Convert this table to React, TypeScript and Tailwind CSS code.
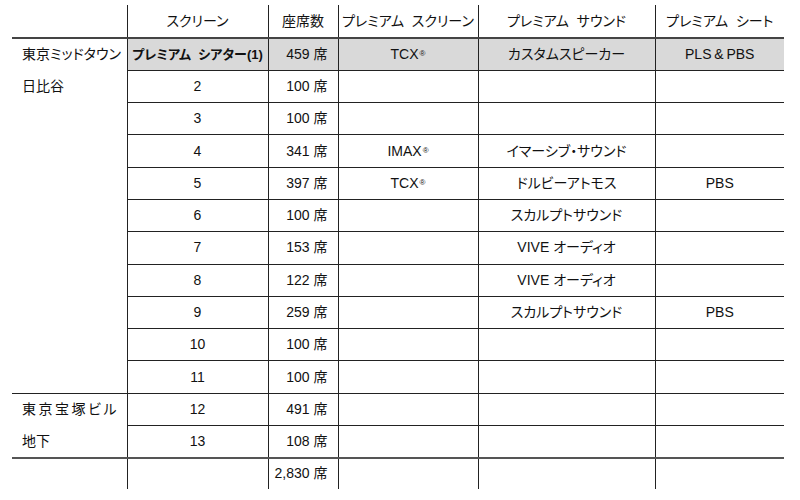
import React from "react";

type Row = {
  site?: string;
  screen: string;
  seats: string;
  scr?: React.ReactNode;
  sound?: string;
  seat?: string;
  gray?: boolean;
  lineLeft?: boolean; // bottom line runs under the first column too
  heavy?: boolean;
  noLine?: boolean;
};

const Reg = ({ t }: { t: string }) => (
  <span>
    {t}
    <sup className="text-[8px] relative -top-[3px] ml-[1px]">®</sup>
  </span>
);

const rows: Row[] = [
  { site: "東京ミッドタウン", screen: "プレミアム  シアター(1)", seats: "459 席", scr: <Reg t="TCX" />, sound: "カスタムスピーカー", seat: "PLS\u2009&\u2009PBS", gray: true },
  { site: "日比谷", screen: "2", seats: "100 席" },
  { screen: "3", seats: "100 席" },
  { screen: "4", seats: "341 席", scr: <Reg t="IMAX" />, sound: "イマーシブ・サウンド" },
  { screen: "5", seats: "397 席", scr: <Reg t="TCX" />, sound: "ドルビーアトモス", seat: "PBS" },
  { screen: "6", seats: "100 席", sound: "スカルプトサウンド" },
  { screen: "7", seats: "153 席", sound: "VIVE オーディオ" },
  { screen: "8", seats: "122 席", sound: "VIVE オーディオ" },
  { screen: "9", seats: "259 席", sound: "スカルプトサウンド", seat: "PBS" },
  { screen: "10", seats: "100 席" },
  { screen: "11", seats: "100 席", lineLeft: true },
  { site: "東京宝塚ビル", screen: "12", seats: "491 席" },
  { site: "地下", screen: "13", seats: "108 席", lineLeft: true, heavy: true },
  { screen: "", seats: "2,830 席", noLine: true },
];

export default function App() {
  const font = "[font-family:'Liberation_Sans','Noto_Sans_CJK_JP',sans-serif] [font-feature-settings:'palt']";
  return (
    <div className={`w-[800px] h-[500px] bg-white text-[#111] pt-[5px] pl-[12px] ${font}`}>
      <table className="table-fixed border-collapse text-[14px]">
        <colgroup>
          <col className="w-[115px]" />
          <col className="w-[141px]" />
          <col className="w-[70px]" />
          <col className="w-[140px]" />
          <col className="w-[177px]" />
          <col className="w-[129px]" />
        </colgroup>
        <thead>
          <tr className="h-[33px] border-b-2 border-[#444]">
            <th />
            <th className="font-normal border-l border-[#222]">スクリーン</th>
            <th className="font-normal border-l border-[#222]">座席数</th>
            <th className="font-normal border-l border-[#222] whitespace-pre">プレミアム  スクリーン</th>
            <th className="font-normal border-l border-[#222] whitespace-pre">プレミアム  サウンド</th>
            <th className="font-normal border-l border-[#222] whitespace-pre">プレミアム  シート</th>
          </tr>
        </thead>
        <tbody>
          {rows.map((r, i) => {
            const line = r.noLine ? "" : r.heavy ? "border-b-2 border-b-[#555]" : "border-b border-b-[#222]";
            const bg = r.gray ? "bg-[#d9d9d9]" : "";
            const cell = `border-l border-l-[#222] ${line} ${bg}`;
            return (
              <tr key={i} className={r.noLine ? "h-[31px]" : "h-[32.3px]"}>
                <td className={`pl-[10px] whitespace-nowrap ${r.lineLeft ? line : ""} ${r.site === "東京宝塚ビル" ? "tracking-[2.5px]" : ""}`}>
                  {r.site}
                </td>
                <td className={`${cell} text-center whitespace-pre ${r.gray ? "font-bold text-[13px]" : ""}`}>{r.screen}</td>
                <td className={`${cell} text-right pr-[10px]`}>{r.seats}</td>
                <td className={`${cell} text-center`}>{r.scr}</td>
                <td className={`${cell} text-center`}>{r.sound}</td>
                <td className={`${cell} text-center`}>{r.seat}</td>
              </tr>
            );
          })}
        </tbody>
      </table>
    </div>
  );
}
